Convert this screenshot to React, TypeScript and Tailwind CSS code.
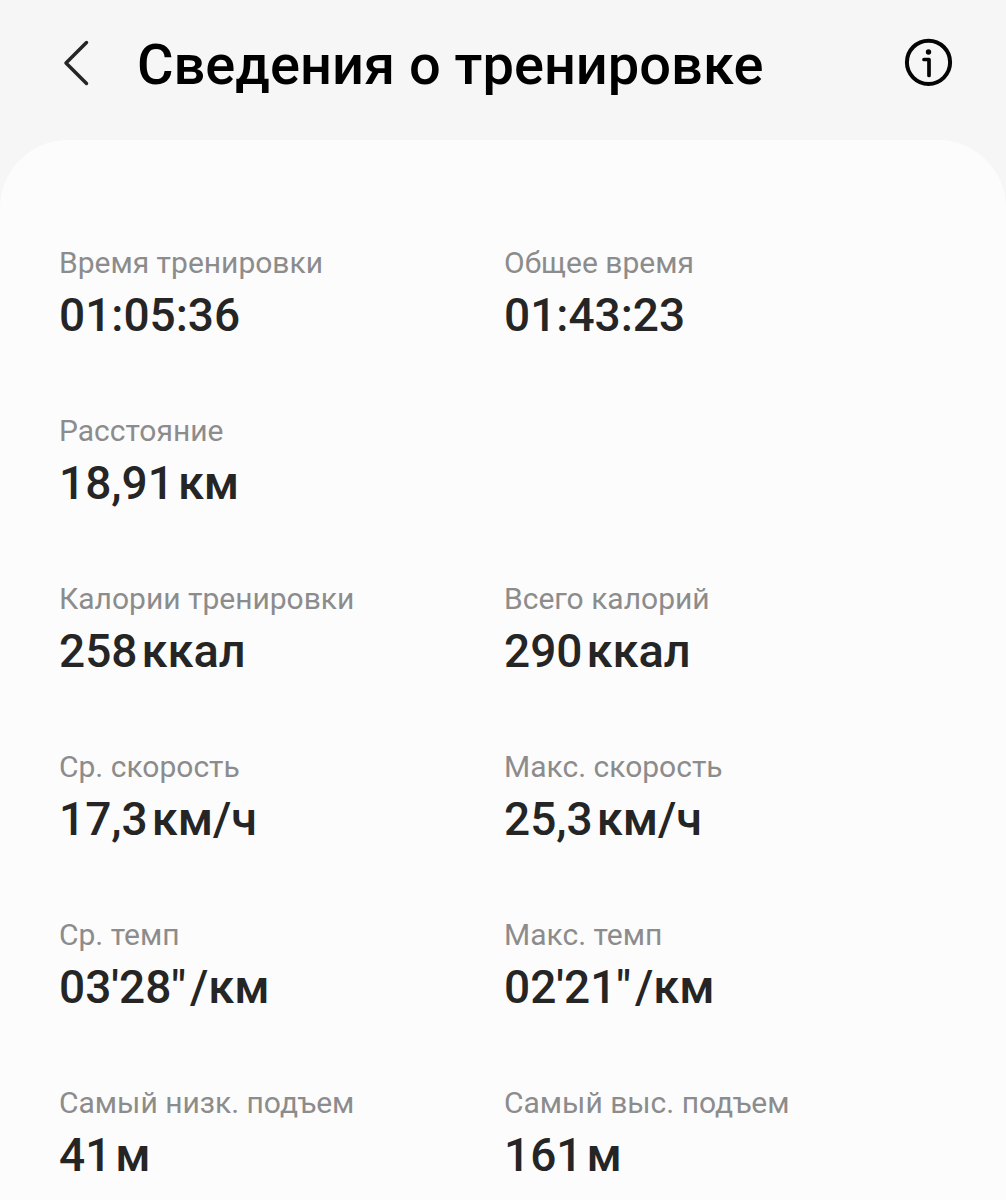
import React from 'react';

interface Metric {
  label: string;
  value: string;
  unit?: string;
}

const rows: Metric[][] = [
  [
    { label: 'Время тренировки', value: '01:05:36' },
    { label: 'Общее время', value: '01:43:23' }
  ],
  [{ label: 'Расстояние', value: '18,91', unit: 'км' }],
  [
    { label: 'Калории тренировки', value: '258', unit: 'ккал' },
    { label: 'Всего калорий', value: '290', unit: 'ккал' }
  ],
  [
    { label: 'Ср. скорость', value: '17,3', unit: 'км/ч' },
    { label: 'Макс. скорость', value: '25,3', unit: 'км/ч' }
  ],
  [
    { label: 'Ср. темп', value: '03\'28"', unit: '/км' },
    { label: 'Макс. темп', value: '02\'21"', unit: '/км' }
  ],
  [
    { label: 'Самый низк. подъем', value: '41', unit: 'м' },
    { label: 'Самый выс. подъем', value: '161', unit: 'м' }
  ]
];

const MetricItem: React.FC<{ item: Metric }> = ({ item }) => (
  <div className="whitespace-nowrap">
    <dt className="text-[30px] leading-10 text-[#8c8c8c]">{item.label}</dt>
    <dd className="flex items-baseline gap-1 text-[46px] leading-16 font-medium text-[#252525]">
      <span>{item.value}</span>
      {item.unit && <span className="text-[47px] leading-16">{item.unit}</span>}
    </dd>
  </div>
);

const App: React.FC = () => {
  return (
    <div className="min-h-screen flex flex-col bg-[#f6f6f6] font-[Roboto,sans-serif]">
      {/* Header */}
      <header className="flex items-center h-[140px] pl-15 pr-[54px] pb-3">
        <button type="button" aria-label="Назад" className="mr-[45px]">
          <svg
            className="w-8 h-12"
            viewBox="0 0 32 48"
            fill="none"
            stroke="#252525"
            strokeWidth="3.5"
            strokeLinecap="round"
            strokeLinejoin="round"
          >
            <path d="M26.5 2.5 6 23l20.5 20.5" />
          </svg>
        </button>
        <h1 className="flex-1 pt-0.5 text-[56px] leading-16 font-medium text-black whitespace-nowrap">
          Сведения о тренировке
        </h1>
        <button type="button" aria-label="Информация">
          <svg
            className="w-12 h-12 overflow-visible"
            viewBox="0 0 48 48"
            fill="none"
            stroke="#050505"
            strokeWidth="4"
            strokeLinecap="round"
            strokeLinejoin="round"
          >
            <circle cx="24.5" cy="22.3" r="21.6" />
            <circle cx="24.5" cy="12" r="2.7" fill="#050505" stroke="none" />
            <path d="M20 19.5h5v16" strokeWidth="3.7" />
          </svg>
        </button>
      </header>

      {/* Details */}
      <main className="flex-1 rounded-t-[68px] bg-[#fcfcfc] pt-[103px] pl-[59px] pr-[57px]">
        <dl className="flex flex-col gap-16">
          {rows.map((row) => (
            <div key={row[0].label} className="grid grid-cols-2">
              {row.map((item) => (
                <MetricItem key={item.label} item={item} />
              ))}
            </div>
          ))}
        </dl>
      </main>
    </div>
  );
};

export default App;
